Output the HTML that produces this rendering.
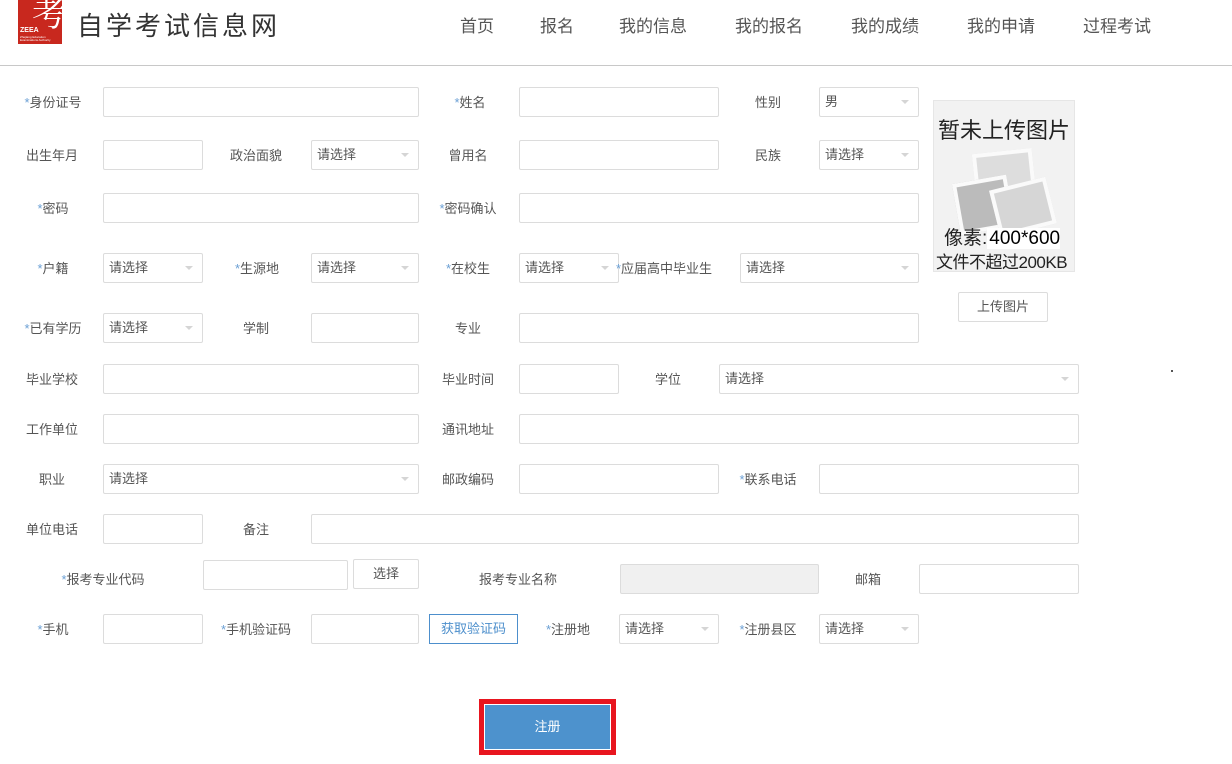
<!DOCTYPE html>
<html><head><meta charset="utf-8">
<style>
*{margin:0;padding:0;box-sizing:border-box}
body{width:1232px;height:764px;background:#fff;position:relative;overflow:hidden;font-family:"Liberation Sans","Noto Sans CJK SC",sans-serif;color:#555}
.nav{position:absolute;top:12px;font-size:17px;color:#555;white-space:nowrap}
.l{position:absolute;font-size:13px;color:#555;transform:translateX(-50%);white-space:nowrap;line-height:30px;height:30px;margin-top:1px}
.l b{font-weight:normal;color:#6a9fd4}
.i{position:absolute;height:30px;border:1px solid #dcdcdc;border-radius:2px;background:#fff}
.s{position:absolute;height:30px;border:1px solid #dcdcdc;border-radius:2px;background:#fff;font-size:13px;color:#555;line-height:28px;padding-left:5px}
.s::after{content:"";position:absolute;right:9px;top:12px;border-left:4px solid transparent;border-right:4px solid transparent;border-top:4px solid #d5d5d5}
.btn{position:absolute;height:30px;border:1px solid #dcdcdc;border-radius:2px;font-size:13px;color:#555;text-align:center;line-height:28px;background:#fff}
</style></head><body>
<div style="position:absolute;left:18px;top:0;width:44px;height:44px;background:#c8281e;color:#fff">
<div style="position:absolute;left:14px;top:-6px;font-size:34px;line-height:36px;font-family:'Noto Serif CJK SC',serif">考</div>
<div style="position:absolute;left:2px;top:27px;font-size:7px;font-weight:bold">ZEEA</div>
<div style="position:absolute;left:2px;top:36px;font-size:3px;line-height:3px">Zhejiang Education<br>Examinations Authority</div>
</div>
<div style="position:absolute;left:77px;top:6px;font-size:26px;color:#333;letter-spacing:3px">自学考试信息网</div>
<div class="nav" style="left:460px">首页</div>
<div class="nav" style="left:540px">报名</div>
<div class="nav" style="left:619px">我的信息</div>
<div class="nav" style="left:735px">我的报名</div>
<div class="nav" style="left:851px">我的成绩</div>
<div class="nav" style="left:967px">我的申请</div>
<div class="nav" style="left:1083px">过程考试</div>
<div style="position:absolute;left:0;top:65px;width:1232px;height:1px;background:#c8c8c8"></div>

<div class="l" style="left:53px;top:87px"><b>*</b>身份证号</div><div class="i" style="left:103px;top:87px;width:316px"></div>
<div class="l" style="left:470px;top:87px"><b>*</b>姓名</div><div class="i" style="left:519px;top:87px;width:200px"></div>
<div class="l" style="left:768px;top:87px">性别</div><div class="s" style="left:819px;top:87px;width:100px">男</div>

<div class="l" style="left:52px;top:140px">出生年月</div><div class="i" style="left:103px;top:140px;width:100px"></div>
<div class="l" style="left:256px;top:140px">政治面貌</div><div class="s" style="left:311px;top:140px;width:108px">请选择</div>
<div class="l" style="left:468px;top:140px">曾用名</div><div class="i" style="left:519px;top:140px;width:200px"></div>
<div class="l" style="left:768px;top:140px">民族</div><div class="s" style="left:819px;top:140px;width:100px">请选择</div>

<div class="l" style="left:53px;top:193px"><b>*</b>密码</div><div class="i" style="left:103px;top:193px;width:316px"></div>
<div class="l" style="left:468px;top:193px"><b>*</b>密码确认</div><div class="i" style="left:519px;top:193px;width:400px"></div>

<div class="l" style="left:53px;top:253px"><b>*</b>户籍</div><div class="s" style="left:103px;top:253px;width:100px">请选择</div>
<div class="l" style="left:257px;top:253px"><b>*</b>生源地</div><div class="s" style="left:311px;top:253px;width:108px">请选择</div>
<div class="l" style="left:468px;top:253px"><b>*</b>在校生</div><div class="s" style="left:519px;top:253px;width:100px">请选择</div>
<div class="l" style="left:664px;top:253px"><b>*</b>应届高中毕业生</div><div class="s" style="left:740px;top:253px;width:179px">请选择</div>

<div class="l" style="left:53px;top:313px"><b>*</b>已有学历</div><div class="s" style="left:103px;top:313px;width:100px">请选择</div>
<div class="l" style="left:256px;top:313px">学制</div><div class="i" style="left:311px;top:313px;width:108px"></div>
<div class="l" style="left:468px;top:313px">专业</div><div class="i" style="left:519px;top:313px;width:400px"></div>

<div class="l" style="left:52px;top:364px">毕业学校</div><div class="i" style="left:103px;top:364px;width:316px"></div>
<div class="l" style="left:468px;top:364px">毕业时间</div><div class="i" style="left:519px;top:364px;width:100px"></div>
<div class="l" style="left:668px;top:364px">学位</div><div class="s" style="left:719px;top:364px;width:360px">请选择</div>

<div class="l" style="left:52px;top:414px">工作单位</div><div class="i" style="left:103px;top:414px;width:316px"></div>
<div class="l" style="left:468px;top:414px">通讯地址</div><div class="i" style="left:519px;top:414px;width:560px"></div>

<div class="l" style="left:52px;top:464px">职业</div><div class="s" style="left:103px;top:464px;width:316px">请选择</div>
<div class="l" style="left:468px;top:464px">邮政编码</div><div class="i" style="left:519px;top:464px;width:200px"></div>
<div class="l" style="left:768px;top:464px"><b>*</b>联系电话</div><div class="i" style="left:819px;top:464px;width:260px"></div>

<div class="l" style="left:52px;top:514px">单位电话</div><div class="i" style="left:103px;top:514px;width:100px"></div>
<div class="l" style="left:256px;top:514px">备注</div><div class="i" style="left:311px;top:514px;width:768px"></div>

<div class="l" style="left:103px;top:564px"><b>*</b>报考专业代码</div><div class="i" style="left:203px;top:560px;width:145px"></div>
<div class="btn" style="left:353px;top:559px;width:66px">选择</div>
<div class="l" style="left:518px;top:564px">报考专业名称</div><div class="i" style="left:620px;top:564px;width:199px;background:#f0f0f0"></div>
<div class="l" style="left:868px;top:564px">邮箱</div><div class="i" style="left:919px;top:564px;width:160px"></div>

<div class="l" style="left:53px;top:614px"><b>*</b>手机</div><div class="i" style="left:103px;top:614px;width:100px"></div>
<div class="l" style="left:256px;top:614px"><b>*</b>手机验证码</div><div class="i" style="left:311px;top:614px;width:108px"></div>
<div class="btn" style="left:429px;top:614px;width:89px;border-color:#4d8fcc;color:#4d8fcc;border-radius:0">获取验证码</div>
<div class="l" style="left:568px;top:614px"><b>*</b>注册地</div><div class="s" style="left:619px;top:614px;width:100px">请选择</div>
<div class="l" style="left:768px;top:614px"><b>*</b>注册县区</div><div class="s" style="left:819px;top:614px;width:100px">请选择</div>

<div style="position:absolute;left:933px;top:100px;width:142px;height:172px;background:#f2f2f2;border:1px solid #e6e6e6">
<div style="position:absolute;left:40px;top:50px;width:60px;height:45px;background:#ddd;border:4px solid #fafafa;transform:rotate(-6deg)"></div>
<div style="position:absolute;left:22px;top:78px;width:55px;height:52px;background:#bbb;border:4px solid #fafafa;transform:rotate(-10deg)"></div>
<div style="position:absolute;left:60px;top:82px;width:58px;height:48px;background:#d6d6d6;border:4px solid #fafafa;transform:rotate(-14deg)"></div>
<div style="position:absolute;left:0;top:12px;width:140px;text-align:center;font-size:22px;color:#222">暂未上传图片</div>
<div style="position:absolute;left:10px;top:122px;font-size:19px;color:#222;white-space:nowrap">像素:<span style="background:#fff;color:#000;padding-left:2px">400*600</span></div>
<div style="position:absolute;left:2px;top:147px;font-size:17px;color:#222;white-space:nowrap;letter-spacing:-0.5px">文件不超过200KB</div>
</div>
<div class="btn" style="left:958px;top:292px;width:90px">上传图片</div>
<div style="position:absolute;left:1171px;top:370px;width:2px;height:2px;background:#555"></div>

<div style="position:absolute;left:479px;top:699px;width:137px;height:56px;background:#e8151f"></div>
<div style="position:absolute;left:484px;top:704px;width:127px;height:46px;background:#4d92cd;border:1px solid #fff;color:#fff;font-size:13px;text-align:center;line-height:44px">注册</div>
</body></html>
